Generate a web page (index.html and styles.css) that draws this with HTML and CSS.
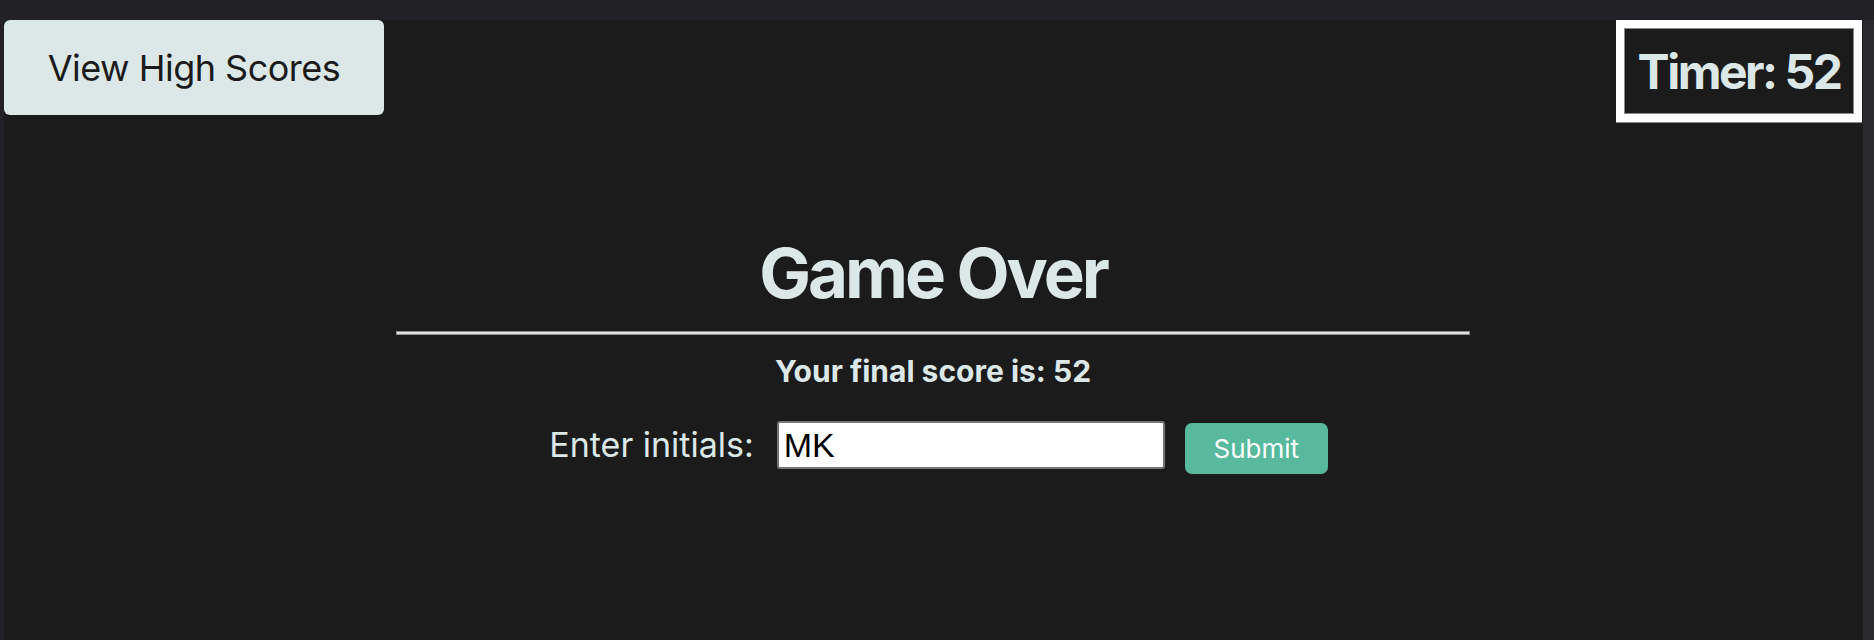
FILE: index.html
```html
<!DOCTYPE html>
<html lang="en">
<head>
<meta charset="utf-8">
<title>Game Over</title>
<link rel="stylesheet" href="styles.css">
</head>
<body>
<div class="frame">
  <div class="page">
    <header class="top">
      <button class="hs-btn">View High Scores</button>
      <div class="timer">Timer: 52</div>
    </header>
    <main class="game">
      <h1 class="title">Game Over</h1>
      <div class="rule"></div>
      <p class="score">Your final score is: 52</p>
      <form class="entry">
        <label class="label" for="initials">Enter initials:</label>
        <input class="initials" id="initials" type="text" value="MK">
        <button class="submit" type="button">Submit</button>
      </form>
    </main>
  </div>
  <div class="rail"></div>
</div>
</body>
</html>
```

FILE: styles.css
```css
* { box-sizing: border-box; }
html, body { margin: 0; padding: 0; }
body {
  background: #222226;
  font-family: Inter, "Noto Sans", "Liberation Sans", sans-serif;
  color: #dce8e8;
}
.frame {
  display: flex;
  height: 640px;
  padding-top: 20px;
  padding-left: 4px;
}
.page {
  flex: 1;
  background: #1b1b1b;
  height: 620px;
}
.rail {
  width: 12px;
  background: #2a2a2e;
  border-left: 1px solid #1f1f22;
}
.top {
  display: flex;
  justify-content: space-between;
  align-items: flex-start;
}
.hs-btn {
  width: 380px;
  height: 95px;
  border: none;
  border-radius: 6px;
  background: #dce8e8;
  color: #1b1b1b;
  font-family: Inter, "Noto Sans", sans-serif;
  font-size: 36px;
  letter-spacing: -0.5px;
  font-weight: 400;
  padding: 0;
}
.timer {
  width: 246px;
  height: 102px;
  border: 8px solid #ffffff;
  box-shadow: inset 0 0 0 1px #8a8a8a, 0 1px 0 #8a8a8a;
  display: flex;
  align-items: center;
  justify-content: center;
  font-size: 48px;
  letter-spacing: -2.5px;
  font-weight: 700;
  color: #dce8e8;
}
.game {
  margin-top: 111px;
  display: flex;
  flex-direction: column;
  align-items: center;
}
.title {
  margin: 0;
  font-size: 69px;
  letter-spacing: -3px;
  line-height: 80px;
  font-weight: 700;
  color: #dce8e8;
}
.rule {
  margin-top: 18px;
  width: 1074px;
  height: 4px;
  background: #e2e2e2;
  border: 1px solid #8e8e8e;
}
.score {
  margin: 18px 0 0;
  font-size: 30px;
  line-height: 36px;
  font-weight: 700;
  color: #dce8e8;
}
.entry {
  margin-top: 32px;
  margin-left: 11px;
  display: flex;
  align-items: flex-start;
}
.label {
  font-size: 34px;
  line-height: 48px;
  color: #dce8e8;
  margin-right: 23px;
}
.initials {
  width: 388px;
  height: 48px;
  border: 2px solid #767676;
  border-radius: 3px;
  background: #ffffff;
  color: #000000;
  font-family: "Liberation Sans", Arial, sans-serif;
  font-size: 34px;
  padding: 0 5px;
  outline: none;
}
.submit {
  margin-left: 20px;
  margin-top: 2px;
  width: 143px;
  height: 51px;
  border: none;
  border-radius: 7px;
  background: #58b99d;
  color: #ffffff;
  font-family: Inter, "Noto Sans", sans-serif;
  font-size: 26px;
  padding: 0;
}
```
